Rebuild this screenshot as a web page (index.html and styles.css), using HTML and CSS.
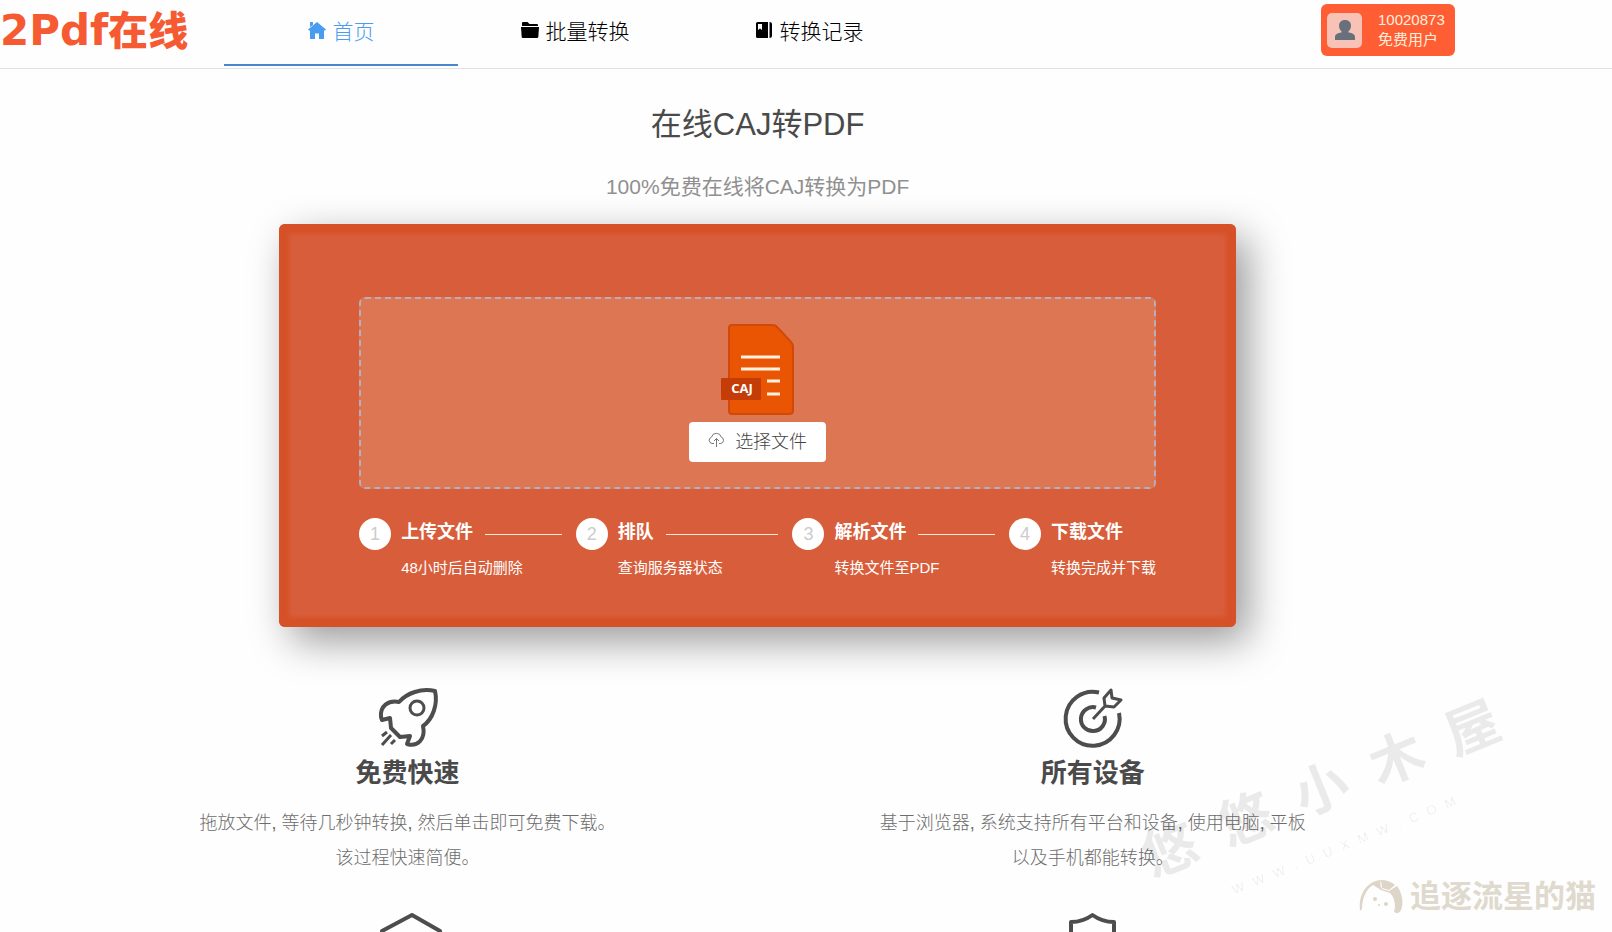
FILE: index.html
```
<!DOCTYPE html>
<html lang="zh-CN">
<head>
    <meta charset="UTF-8">
    <meta name="viewport" content="width=device-width, initial-scale=1.0">
    <title>在线CAJ转PDF - 2Pdf在线</title>
    <link rel="stylesheet" href="styles.css">
</head>
<body>
    <!-- 顶部导航 -->
    <header class="header">
        <a class="logo" href="#"><span class="logo-latin">2Pdf</span>在线</a>
        <nav class="menu">
            <a class="menu-item active" href="#">
                <svg class="menu-icon" viewBox="0 0 18 18" fill="currentColor">
                    <path d="M9 1 0 8.500l1.200 1.300L2 9.200V18h5v-5.500h4V18h5V9.200l.8.600L18 8.500 9 1z"/>
                    <path d="M2 1h3v3L2 6z"/>
                </svg>
                首页
            </a>
            <a class="menu-item" href="#">
                <svg class="menu-icon" viewBox="0 0 18 18" fill="currentColor">
                    <path d="M1 2q0-1 1-1h4.500l2 2H16q1 0 1 1v1H1zM0 6h18l-.7 10q-.1 1-1.100 1H1.800q-1 0-1.100-1z"/>
                </svg>
                批量转换
            </a>
            <a class="menu-item" href="#">
                <svg class="menu-icon" viewBox="0 0 18 18" fill="currentColor">
                    <path fill-rule="evenodd" d="M2.500 1H13v16H2.500Q1 17 1 15.500v-13Q1 1 2.500 1zM3 3v6l2-1.500L7 9V3z"/>
                    <path d="M14.500 1q2.500 0 2.500 2v12q0 2-2.500 2z"/>
                </svg>
                转换记录
            </a>
        </nav>
        <button class="user" type="button">
            <span class="avatar">
                <svg width="20" height="20" viewBox="0 0 20 20" fill="#68717b">
                    <path d="M10 0c4 0 6 2.500 6 5.500 0 2.600-1 4.500-2.500 5.800v1.200c4 .8 6.500 1.500 6.500 4.500V20H0v-3c0-3 2.500-3.700 6.500-4.500v-1.200C5 10 4 8.100 4 5.500 4 2.500 6 0 10 0z"/>
                </svg>
            </span>
            <span class="user-info">10020873<br>免费用户</span>
        </button>
    </header>

    <main class="main">
        <h1 class="title">在线CAJ转PDF</h1>
        <p class="subtitle">100%免费在线将CAJ转换为PDF</p>

        <!-- 上传区域 -->
        <section class="card">
            <div class="dropzone">
                <svg class="file-icon" width="73" height="92" viewBox="0 0 73 92">
                    <path d="M11 1h40q4 0 6 3l13 14q2 2 2 5v64q0 3-4 3H11q-3 0-3-3V4q0-3 3-3z" fill="#ea5504" stroke="#cf4a0a" stroke-width="2"/>
                    <path d="M20 33h39M20 45h39M46 57h13M46 70h13" stroke="#fff1e0" stroke-width="3"/>
                    <rect x="0" y="54" width="40" height="22" rx="1" fill="#c43c06"/>
                    <text x="21" y="69" class="file-type">CAJ</text>
                </svg>
                <button class="select-btn" type="button">
                    <svg width="17" height="16" viewBox="0 0 17 16" fill="none" stroke="#777" stroke-width="1">
                        <path d="M6 11.500H4a3.300 3.300 0 0 1-.5-6.400 5 5 0 0 1 9.700 0 3.300 3.300 0 0 1-.5 6.400H11"/>
                        <path d="M8.500 15V6.500M6 9l2.500-2.500L11 9"/>
                    </svg>
                    选择文件
                </button>
            </div>

            <ol class="steps">
                <li class="step">
                    <span class="step-num">1</span>
                    <div class="step-body">
                        <div class="step-title">上传文件</div>
                        <div class="step-desc">48小时后自动删除</div>
                    </div>
                </li>
                <li class="step">
                    <span class="step-num">2</span>
                    <div class="step-body">
                        <div class="step-title">排队</div>
                        <div class="step-desc">查询服务器状态</div>
                    </div>
                </li>
                <li class="step">
                    <span class="step-num">3</span>
                    <div class="step-body">
                        <div class="step-title">解析文件</div>
                        <div class="step-desc">转换文件至PDF</div>
                    </div>
                </li>
                <li class="step">
                    <span class="step-num">4</span>
                    <div class="step-body">
                        <div class="step-title">下载文件</div>
                        <div class="step-desc">转换完成并下载</div>
                    </div>
                </li>
            </ol>
        </section>

        <!-- 特点介绍 -->
        <section class="features">
            <div class="feature">
                <svg class="feature-icon" viewBox="0 0 60 60">
                    <path d="M57 3C43 0 29 5 21 14 10 12 2 18 3 29l1 3 8-2 1 10 9 9 10-1-3 8c10 3 19-4 16-18C55 31 60 16 57 3z" stroke-width="4"/>
                    <circle cx="39" cy="20" r="7" stroke-width="3"/>
                    <path d="M4 48l5-4M4 57l9-10M13 56l4-4" stroke-width="3"/>
                </svg>
                <h2>免费快速</h2>
                <p>拖放文件, 等待几秒钟转换, 然后单击即可免费下载。该过程快速简便。</p>
            </div>
            <div class="feature">
                <svg class="feature-icon" viewBox="0 0 60 60">
                    <path d="M36 4.500A27 27 0 1 0 56 25" stroke-width="4"/>
                    <path d="M33 19.500A12 12 0 1 0 41.500 28" stroke-width="4"/>
                    <path d="M30 31 43 17M42 18l-1-8 7-8 1 8 9 2-7 7z" stroke-width="3"/>
                </svg>
                <h2>所有设备</h2>
                <p>基于浏览器, 系统支持所有平台和设备, 使用电脑, 平板以及手机都能转换。</p>
            </div>
            <div class="feature">
                <svg class="feature-icon" viewBox="0 0 60 60">
                    <path d="M34 2 62 18v28L34 62 4 46V18z" stroke-width="4"/>
                </svg>
            </div>
            <div class="feature">
                <svg class="feature-icon" viewBox="0 0 60 60">
                    <path d="M29.500 2Q20 9 8 9v24q0 16 21.500 25Q51 49 51 33V9Q39 9 29.500 2z" stroke-width="4"/>
                </svg>
            </div>
        </section>
    </main>

    <!-- 水印 -->
    <div class="watermark">
        <div class="watermark-name"><span>悠</span><span>悠</span><span>小</span><span>木</span><span>屋</span></div>
        <div class="watermark-url"><span>W</span><span>W</span><span>W</span><span>.</span><span>U</span><span>U</span><span>X</span><span>M</span><span>W</span><span>.</span><span>C</span><span>O</span><span>M</span></div>
    </div>
    <div class="author">
        <svg width="44" height="36" viewBox="0 0 44 36" fill="#ddd5c7">
            <path d="M1 32C-1 14 9 2 22 1c-1 3-1 6 1 9l7 2 8-5c5 6 7 17 4 24q-2 5-7 2c2-6 1-14-4-19l-9-3-8-5C7 10 3 20 3 30z"/>
            <path d="M22 1q8 0 14 5l-6 5-7-2z"/>
            <circle cx="16" cy="20" r="2"/>
            <circle cx="27" cy="25" r="2"/>
            <circle cx="20" cy="26" r="1"/>
        </svg>
        追逐流星的猫
    </div>
</body>
</html>
```
FILE: styles.css
```
* {
    box-sizing: border-box;
}

body {
    position: relative;
    margin: 0;
    height: 100vh;
    overflow: hidden;
    font-family: "Liberation Sans", "Noto Sans CJK SC", sans-serif;
    color: #4a4a4a;
    background-color: #fefefe;
}

h1, h2, p, ol {
    margin: 0;
    padding: 0;
}

a {
    color: inherit;
    text-decoration: none;
}

button {
    border: none;
    font-family: inherit;
    cursor: pointer;
}

/* 顶部导航 */
.header {
    display: flex;
    align-items: flex-start;
    height: 69px;
    padding-right: 157px;
    border-bottom: 1px solid #e2e2e2;
}

.logo {
    width: 224px;
    line-height: 62px;
    font-size: 40px;
    font-weight: 900;
    color: #f65a32;
    white-space: nowrap;
}

.logo-latin {
    font-family: "DejaVu Sans", sans-serif;
    font-size: 42px;
    font-weight: bold;
}

.menu {
    display: flex;
    flex: 1;
}

.menu-item {
    display: flex;
    justify-content: center;
    align-items: center;
    gap: 7px;
    width: 234px;
    height: 66px;
    padding-bottom: 4px;
    border-bottom: 2px solid transparent;
    font-size: 21px;
    font-weight: 300;
    color: #000;
}

.menu-item.active {
    color: #4a9cf0;
    border-bottom-color: #4a86cc;
}

.menu-icon {
    width: 18px;
    height: 18px;
}

.user {
    display: flex;
    align-items: center;
    gap: 16px;
    width: 134px;
    height: 52px;
    margin-top: 4px;
    padding: 0 6px;
    border-radius: 6px;
    background-color: #ff5e34;
    color: #ffeedd;
    font-size: 15px;
    line-height: 20px;
    text-align: left;
}

.avatar {
    display: flex;
    justify-content: center;
    align-items: center;
    width: 35px;
    height: 35px;
    border-radius: 5px;
    background-color: #f8c2b6;
}

/* 主体 */
.main {
    width: 94%;
}

.title {
    padding-top: 32px;
    font-size: 31px;
    font-weight: normal;
    line-height: 48px;
    text-align: center;
}

.subtitle {
    margin-top: 23px;
    font-size: 21px;
    line-height: 30px;
    text-align: center;
    color: #909090;
}

.card {
    width: 90%;
    max-width: 957px;
    margin: 22px auto 0;
    padding: 73px 80px 47px;
    border-radius: 6px;
    background-color: #d85e3b;
    box-shadow: 12px 14px 40px rgba(0, 0, 0, 0.4), inset 0 0 4px 10px #d65127;
}

.dropzone {
    display: flex;
    flex-direction: column;
    align-items: center;
    height: 192px;
    padding-top: 25px;
    border: 2px dashed #b5aebf;
    border-radius: 6px;
    background-color: #dd7652;
}

.file-icon {
    margin-bottom: 6px;
}

.file-type {
    font-family: "Open Sans", sans-serif;
    font-size: 13px;
    font-weight: bold;
    text-anchor: middle;
    fill: #fff;
}

.select-btn {
    display: flex;
    justify-content: center;
    align-items: center;
    gap: 10px;
    width: 137px;
    height: 40px;
    padding: 0 0 4px;
    border-radius: 4px;
    background-color: #fff;
    color: #444;
    font-size: 18px;
    font-weight: 300;
}

.steps {
    display: flex;
    gap: 14px;
    margin-top: 26px;
    list-style: none;
    color: #fff;
}

.step {
    display: flex;
    flex: 1;
    gap: 10px;
}

.step:last-child {
    flex: none;
}

.step-num {
    width: 32px;
    height: 32px;
    margin-top: 3px;
    border-radius: 50%;
    background-color: #fff;
    color: #ccc;
    font-size: 18px;
    line-height: 32px;
    text-align: center;
}

.step-body {
    flex: 1;
}

.step-title {
    display: flex;
    align-items: center;
    gap: 12px;
    font-size: 18px;
    font-weight: bold;
    line-height: 34px;
    white-space: nowrap;
}

.step:not(:last-child) .step-title::after {
    content: "";
    flex: 1;
    height: 1px;
    margin-top: 4px;
    background-color: #ffe8da;
}

.step-desc {
    margin-top: 7px;
    font-size: 15px;
    line-height: 24px;
    white-space: nowrap;
}

/* 特点介绍 */
.features {
    display: grid;
    grid-template-columns: 1fr 1fr;
    row-gap: 37px;
    margin: 61px 80px 0 65px;
}

.feature {
    display: flex;
    flex-direction: column;
    align-items: center;
    text-align: center;
}

.feature-icon {
    width: 60px;
    height: 60px;
    overflow: visible;
    fill: none;
    stroke: #4d4d4d;
    stroke-linejoin: round;
}

.feature h2 {
    margin-top: 6px;
    font-size: 26px;
    line-height: 38px;
}

.feature p {
    max-width: 430px;
    margin-top: 14px;
    font-size: 18px;
    font-weight: 300;
    line-height: 35px;
    color: #6c6c6c;
}

/* 水印 */
.watermark {
    position: absolute;
    right: 94px;
    bottom: 73px;
    width: 380px;
    transform: rotate(-22deg);
    color: rgba(0, 0, 0, 0.08);
    pointer-events: none;
}

.watermark-name,
.watermark-url {
    display: flex;
    justify-content: space-between;
}

.watermark-name {
    font-size: 54px;
    font-weight: bold;
    line-height: 70px;
}

.watermark-url {
    margin: 16px 70px 0;
    font-size: 13px;
    line-height: 20px;
}

.author {
    position: absolute;
    right: 16px;
    bottom: 17px;
    display: flex;
    align-items: center;
    gap: 7px;
    font-size: 31px;
    font-weight: bold;
    line-height: 36px;
    color: #e0d9cd;
}
```
